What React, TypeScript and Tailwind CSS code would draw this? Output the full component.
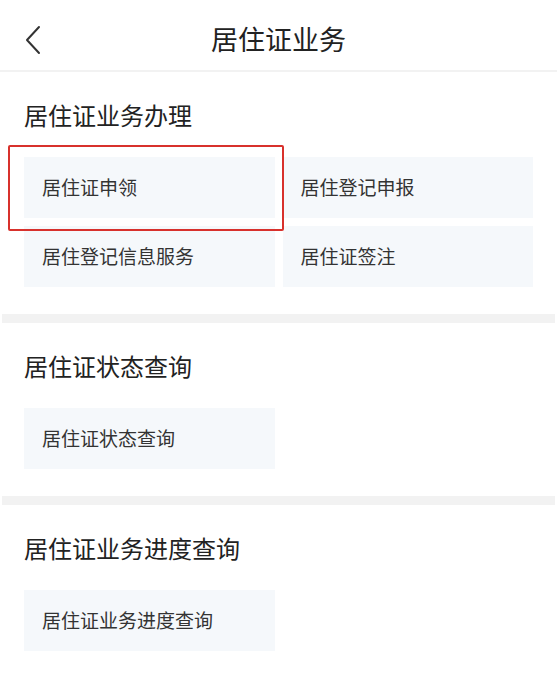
import React from "react";

const font = { fontFamily: '"Noto Sans CJK SC", "Noto Sans", sans-serif' };

type Item = { label: string; marked?: boolean };

const sections: { title: string; items: Item[] }[] = [
  {
    title: "居住证业务办理",
    items: [
      { label: "居住证申领", marked: true },
      { label: "居住登记申报" },
      { label: "居住登记信息服务" },
      { label: "居住证签注" },
    ],
  },
  { title: "居住证状态查询", items: [{ label: "居住证状态查询" }] },
  { title: "居住证业务进度查询", items: [{ label: "居住证业务进度查询" }] },
];

function Card({ item }: { item: Item }) {
  return (
    <div className="relative h-[61px] flex items-center pl-[18px] bg-[#f5f8fb] text-[19px] text-[#333]">
      {item.label}
      {item.marked && (
        <div className="absolute z-10 -left-[16px] -top-[12px] w-[276px] h-[86px] border-2 border-[#d8312c] rounded-[2px]" />
      )}
    </div>
  );
}

export default function App() {
  return (
    <div className="w-[557px] min-h-[693px] bg-white" style={font}>
      {/* Top bar */}
      <header className="relative h-[72px] flex items-center justify-center border-b-2 border-[#f2f2f2]">
        <button className="absolute left-[24px] top-[25px] p-0">
          <svg width="18" height="30" viewBox="0 0 18 30" fill="none">
            <polyline points="15,2 3,15 15,28" stroke="#333" strokeWidth="2" strokeLinecap="round" strokeLinejoin="round" />
          </svg>
        </button>
        <h1 className="text-[27px] text-[#222] leading-none mt-[6px]">居住证业务</h1>
      </header>

      {sections.map((s, i) => (
        <div key={s.title}>
          {i > 0 && <div className="h-[9px] bg-[#f2f2f2] mx-[2px]" />}
          <section className="px-[24px] pt-[27px] pb-[27px]">
            <h2 className="h-[32px] leading-[32px] text-[24px] text-[#222]">{s.title}</h2>
            <div className="mt-[26px] grid grid-cols-2 gap-x-[8px] gap-y-[8px]">
              {s.items.map((it) => (
                <Card key={it.label} item={it} />
              ))}
            </div>
          </section>
        </div>
      ))}
    </div>
  );
}
